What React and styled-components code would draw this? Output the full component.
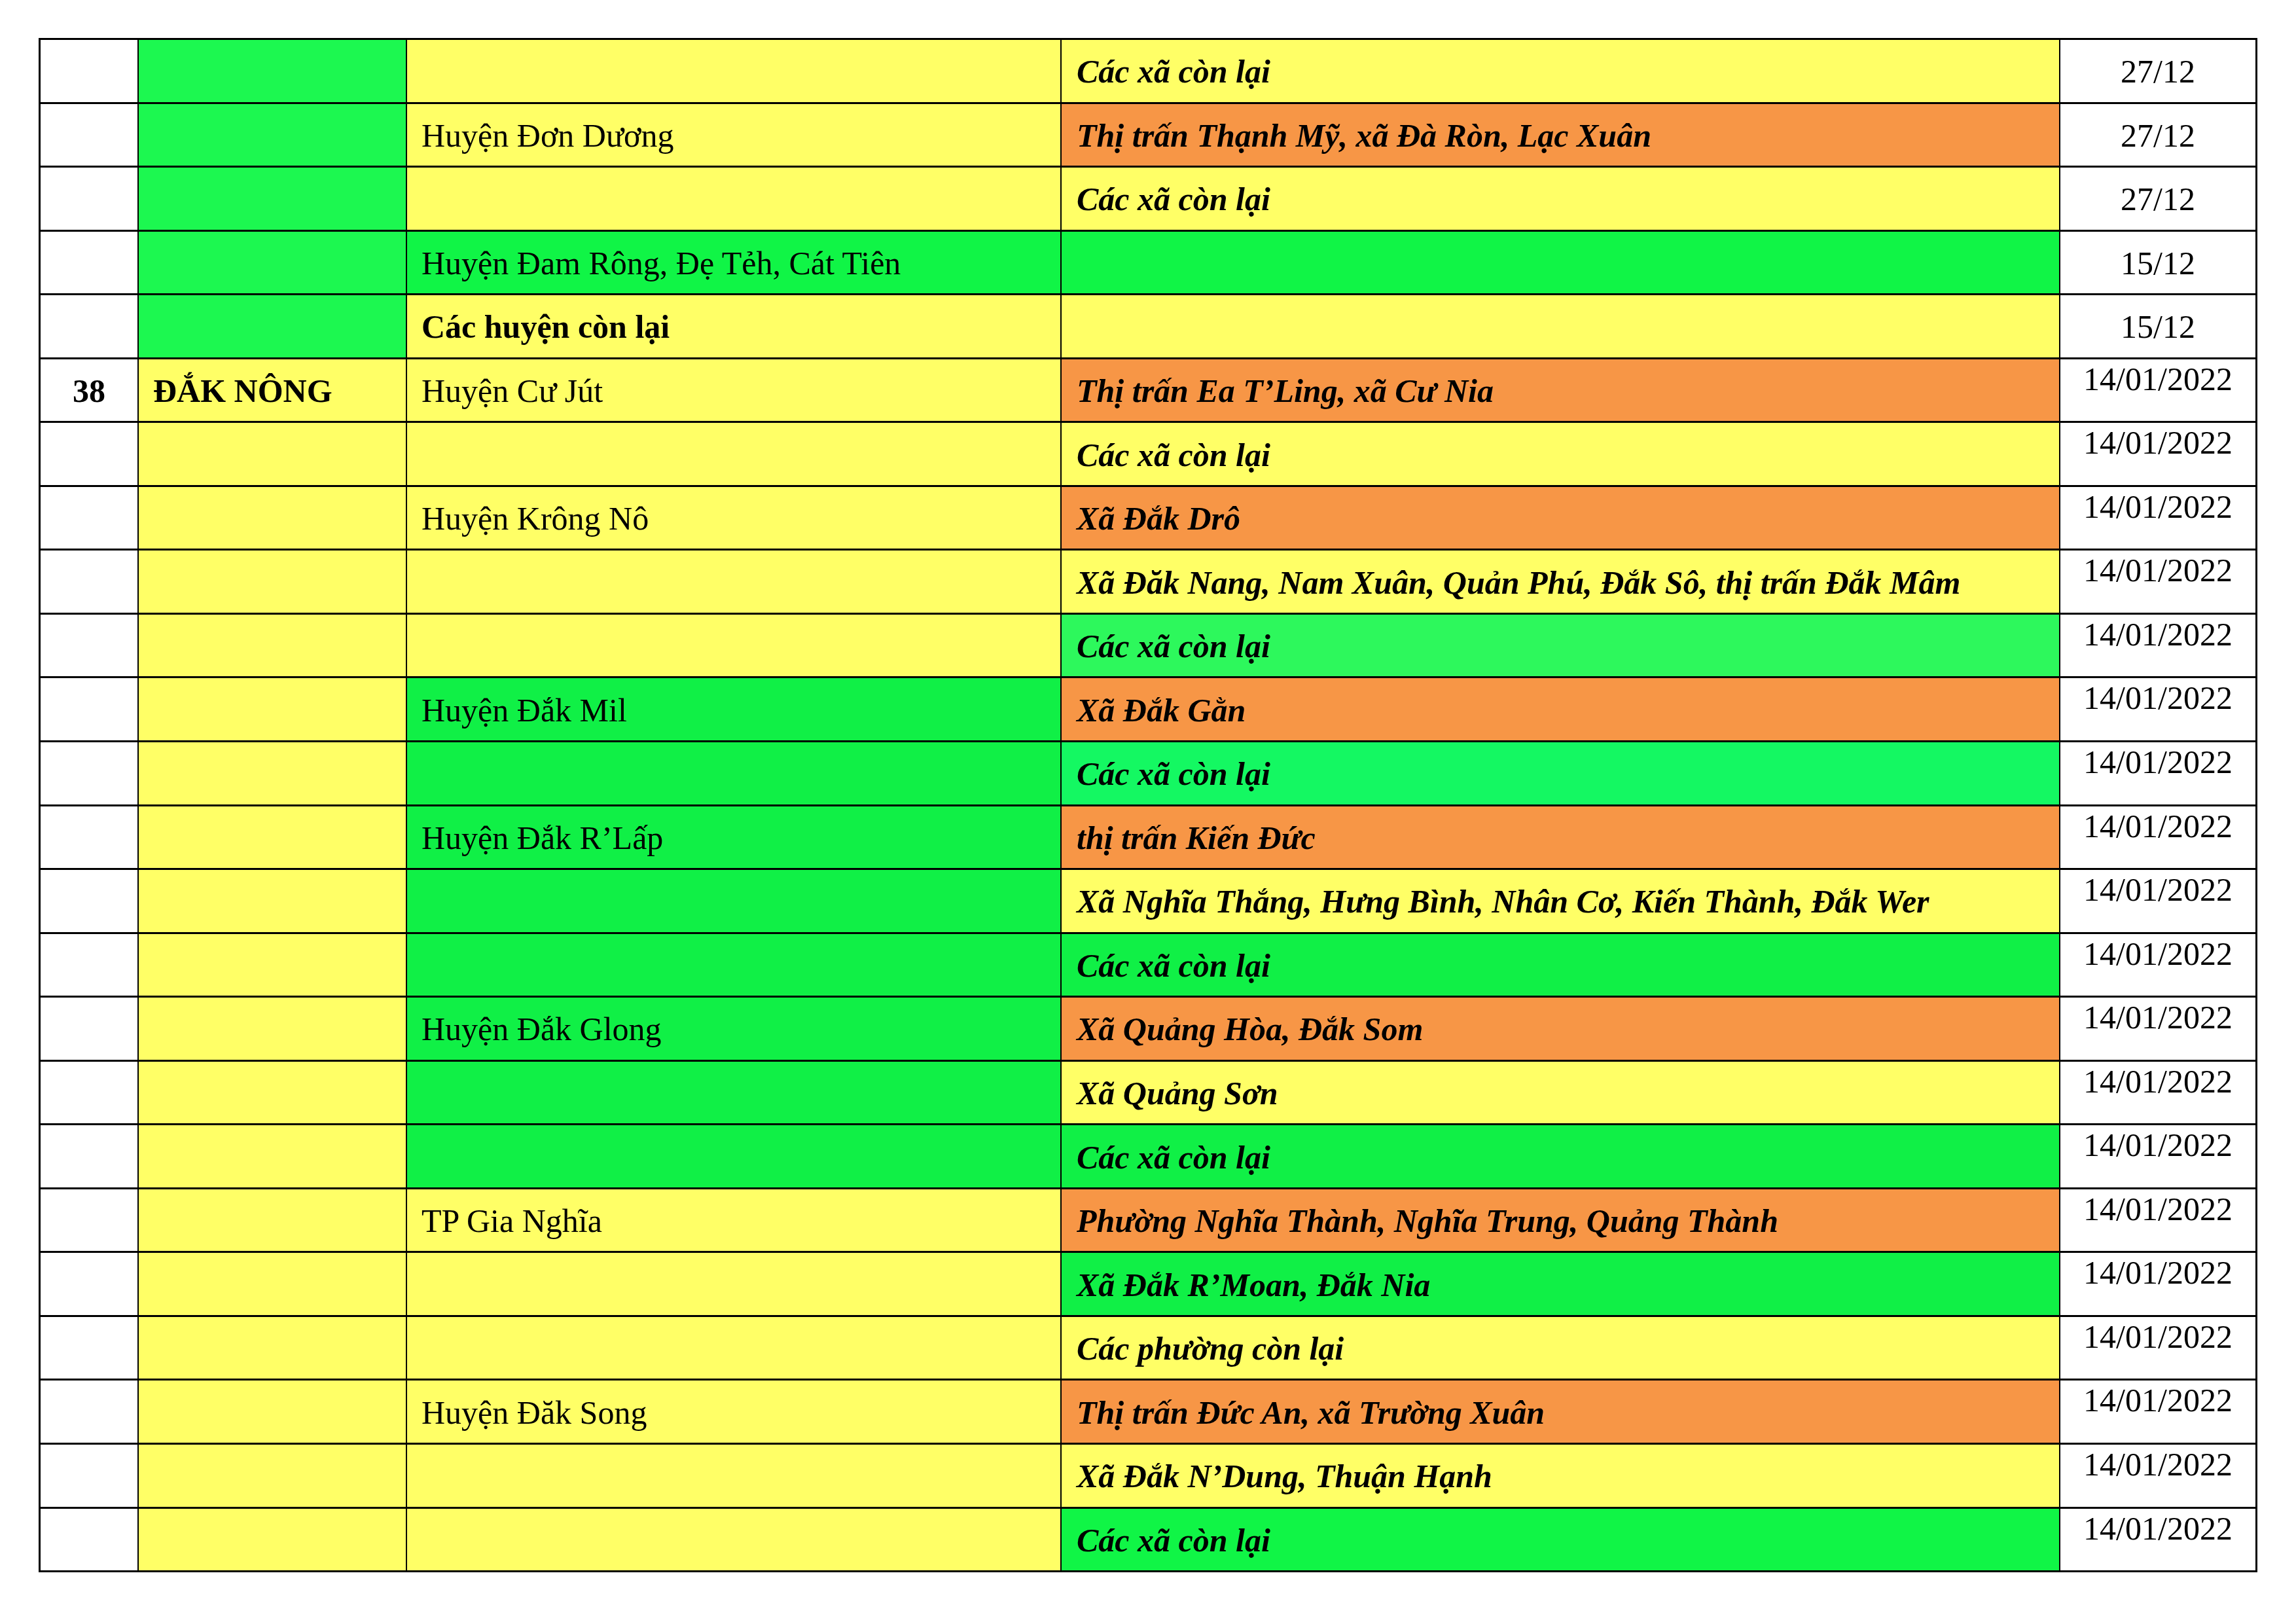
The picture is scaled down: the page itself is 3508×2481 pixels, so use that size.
import React from 'react';
import styled, { createGlobalStyle } from 'styled-components';

const GlobalStyle = createGlobalStyle`
  html, body { margin: 0; padding: 0; background: #ffffff; }
  body { font-family: "Liberation Serif", "Times New Roman", serif; color: #000000; }
`;

const Y = '#ffff66';
const G1 = '#1cf850';
const G2 = '#10f546';
const G3 = '#2df85c';
const G4 = '#14f862';
const G5 = '#10f046';
const O = '#f79646';
const W = '#ffffff';

const rows = [
  { prov: G1, dist: Y, area: Y, areaText: 'Các xã còn lại', date: '27/12' },
  { prov: G1, dist: Y, distText: 'Huyện Đơn Dương', area: O, areaText: 'Thị trấn Thạnh Mỹ, xã Đà Ròn, Lạc Xuân', date: '27/12' },
  { prov: G1, dist: Y, area: Y, areaText: 'Các xã còn lại', date: '27/12' },
  { prov: G1, dist: G2, distText: 'Huyện Đam Rông, Đẹ Tẻh, Cát Tiên', area: G2, date: '15/12' },
  { prov: G1, dist: Y, distText: 'Các huyện còn lại', distBold: true, area: Y, date: '15/12' },
  { num: '38', provText: 'ĐẮK NÔNG', prov: Y, dist: Y, distText: 'Huyện Cư Jút', area: O, areaText: 'Thị trấn Ea T’Ling, xã Cư Nia', date: '14/01/2022', top: true },
  { prov: Y, dist: Y, area: Y, areaText: 'Các xã còn lại', date: '14/01/2022', top: true },
  { prov: Y, dist: Y, distText: 'Huyện Krông Nô', area: O, areaText: 'Xã Đắk Drô', date: '14/01/2022', top: true },
  { prov: Y, dist: Y, area: Y, areaText: 'Xã Đăk Nang, Nam Xuân, Quản Phú, Đắk Sô, thị trấn Đắk Mâm', date: '14/01/2022', top: true },
  { prov: Y, dist: Y, area: G3, areaText: 'Các xã còn lại', date: '14/01/2022', top: true },
  { prov: Y, dist: G5, distText: 'Huyện Đắk Mil', area: O, areaText: 'Xã Đắk Gằn', date: '14/01/2022', top: true },
  { prov: Y, dist: G5, area: G4, areaText: 'Các xã còn lại', date: '14/01/2022', top: true },
  { prov: Y, dist: G5, distText: 'Huyện Đắk R’Lấp', area: O, areaText: 'thị trấn Kiến Đức', date: '14/01/2022', top: true },
  { prov: Y, dist: G5, area: Y, areaText: 'Xã Nghĩa Thắng, Hưng Bình, Nhân Cơ, Kiến Thành, Đắk Wer', date: '14/01/2022', top: true },
  { prov: Y, dist: G5, area: G5, areaText: 'Các xã còn lại', date: '14/01/2022', top: true },
  { prov: Y, dist: G5, distText: 'Huyện Đắk Glong', area: O, areaText: 'Xã Quảng Hòa, Đắk Som', date: '14/01/2022', top: true },
  { prov: Y, dist: G5, area: Y, areaText: 'Xã Quảng Sơn', date: '14/01/2022', top: true },
  { prov: Y, dist: G5, area: G5, areaText: 'Các xã còn lại', date: '14/01/2022', top: true },
  { prov: Y, dist: Y, distText: 'TP Gia Nghĩa', area: O, areaText: 'Phường Nghĩa Thành, Nghĩa Trung, Quảng Thành', date: '14/01/2022', top: true },
  { prov: Y, dist: Y, area: G5, areaText: 'Xã Đắk R’Moan, Đắk Nia', date: '14/01/2022', top: true },
  { prov: Y, dist: Y, area: Y, areaText: 'Các phường còn lại', date: '14/01/2022', top: true },
  { prov: Y, dist: Y, distText: 'Huyện Đăk Song', area: O, areaText: 'Thị trấn Đức An, xã Trường Xuân', date: '14/01/2022', top: true },
  { prov: Y, dist: Y, area: Y, areaText: 'Xã Đắk N’Dung, Thuận Hạnh', date: '14/01/2022', top: true },
  { prov: Y, dist: Y, area: G2, areaText: 'Các xã còn lại', date: '14/01/2022', top: true },
];

const Page = styled.div`
  width: 3508px;
  height: 2481px;
  box-sizing: border-box;
  padding: 58px 0 0 59px;
  background: #ffffff;
`;

const Table = styled.div`
  display: grid;
  grid-template-columns: 148px 408px 998px 1524px 298px;
  grid-auto-rows: 94.55px;
  column-gap: 2px;
  row-gap: 3px;
  width: max-content;
  background: #000000;
  border: 3px solid #000000;
`;

const BaseCell = styled.div`
  box-sizing: border-box;
  display: flex;
  align-items: center;
  padding-top: 2px;
  background: ${(p) => p.$bg};
  font-size: 50px;
  line-height: normal;
  white-space: nowrap;
  overflow: hidden;
`;

const NumCell = styled(BaseCell)`
  justify-content: center;
  font-weight: 700;
`;

const ProvinceCell = styled(BaseCell)`
  padding-left: 22px;
  font-weight: 700;
`;

const DistrictCell = styled(BaseCell)`
  padding-left: 22px;
  font-weight: ${(p) => (p.$bold ? 700 : 400)};
`;

const AreaCell = styled(BaseCell)`
  padding-left: 23px;
  font-weight: 700;
  font-style: italic;
`;

const DateCell = styled(BaseCell)`
  justify-content: center;
  align-items: ${(p) => (p.$top ? 'flex-start' : 'center')};
  padding-top: ${(p) => (p.$top ? '1px' : '2px')};
`;

export default function App() {
  return (
    <>
      <GlobalStyle />
      <Page>
        <Table>
          {rows.map((r, i) => (
            <React.Fragment key={i}>
              <NumCell $bg={W}>{r.num || ''}</NumCell>
              <ProvinceCell $bg={r.prov}>{r.provText || ''}</ProvinceCell>
              <DistrictCell $bg={r.dist} $bold={r.distBold}>{r.distText || ''}</DistrictCell>
              <AreaCell $bg={r.area}>{r.areaText || ''}</AreaCell>
              <DateCell $bg={W} $top={r.top}>{r.date}</DateCell>
            </React.Fragment>
          ))}
        </Table>
      </Page>
    </>
  );
}
